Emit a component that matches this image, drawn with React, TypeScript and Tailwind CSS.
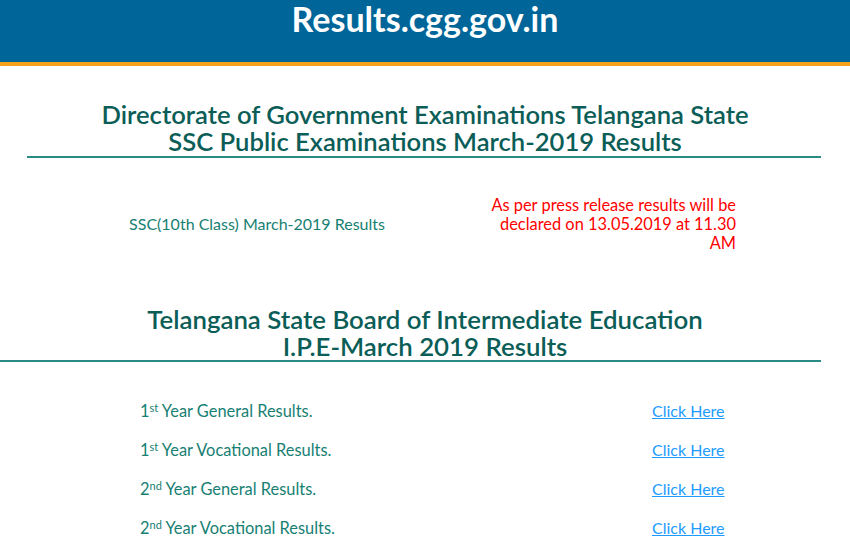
import React from 'react';

const ROWS = [
  { n: '1', sup: 'st', label: 'Year General Results.' },
  { n: '1', sup: 'st', label: 'Year Vocational Results.' },
  { n: '2', sup: 'nd', label: 'Year General Results.' },
  { n: '2', sup: 'nd', label: 'Year Vocational Results.' },
];

const App: React.FC = () => {
  return (
    <div className="min-h-screen bg-white" style={{ fontFamily: 'Lato, "Open Sans", sans-serif' }}>
      {/* Top banner */}
      <div className="h-[66px] bg-[#006699] border-b-4 border-[#f7a21b]">
        <h1 className="text-center text-white font-bold text-[34px] leading-[38px]">Results.cgg.gov.in</h1>
      </div>

      <div className="pt-[35px]">
        <div className="text-center text-[#0b5d57] font-semibold text-[25.6px] leading-[27px]">
          <div>Directorate of Government Examinations Telangana State</div>
          <div>SSC Public Examinations March-2019 Results</div>
        </div>
        <div className="ml-[27px] w-[794px] h-[2px] bg-[#2a8a86] mt-[1px]" />

        <div className="flex items-center mt-[37px] h-[57px] leading-[19px]">
          <div className="w-[486px] pl-[28px] text-center text-[16px] text-[#178073]">SSC(10th Class) March-2019 Results</div>
          <div className="w-[250px] text-right text-[16.4px] text-[#ff0000]">
            As per press release results will be declared on 13.05.2019 at 11.30 AM
          </div>
        </div>

        <div className="mt-[54px] text-center text-[#0b5d57] font-semibold text-[25.8px] leading-[27px]">
          <div>Telangana State Board of Intermediate Education</div>
          <div>I.P.E-March 2019 Results</div>
        </div>
        <div className="w-[821px] h-[2px] bg-[#2a8a86]" />

        <div className="mt-[30px]">
          {ROWS.map((r, i) => (
            <div key={i} className="flex items-baseline h-[39px] pt-[9px] leading-[20px]">
              <div className="w-[512px] pl-[140px] text-[16.4px] text-[#178073]">
                {r.n}
                <sup className="text-[11px]">{r.sup}</sup> {r.label}
              </div>
              <a href="#" className="ml-[140px] text-[16px] text-[#1e9bff] underline">Click Here</a>
            </div>
          ))}
        </div>
      </div>
    </div>
  );
};

export default App;
